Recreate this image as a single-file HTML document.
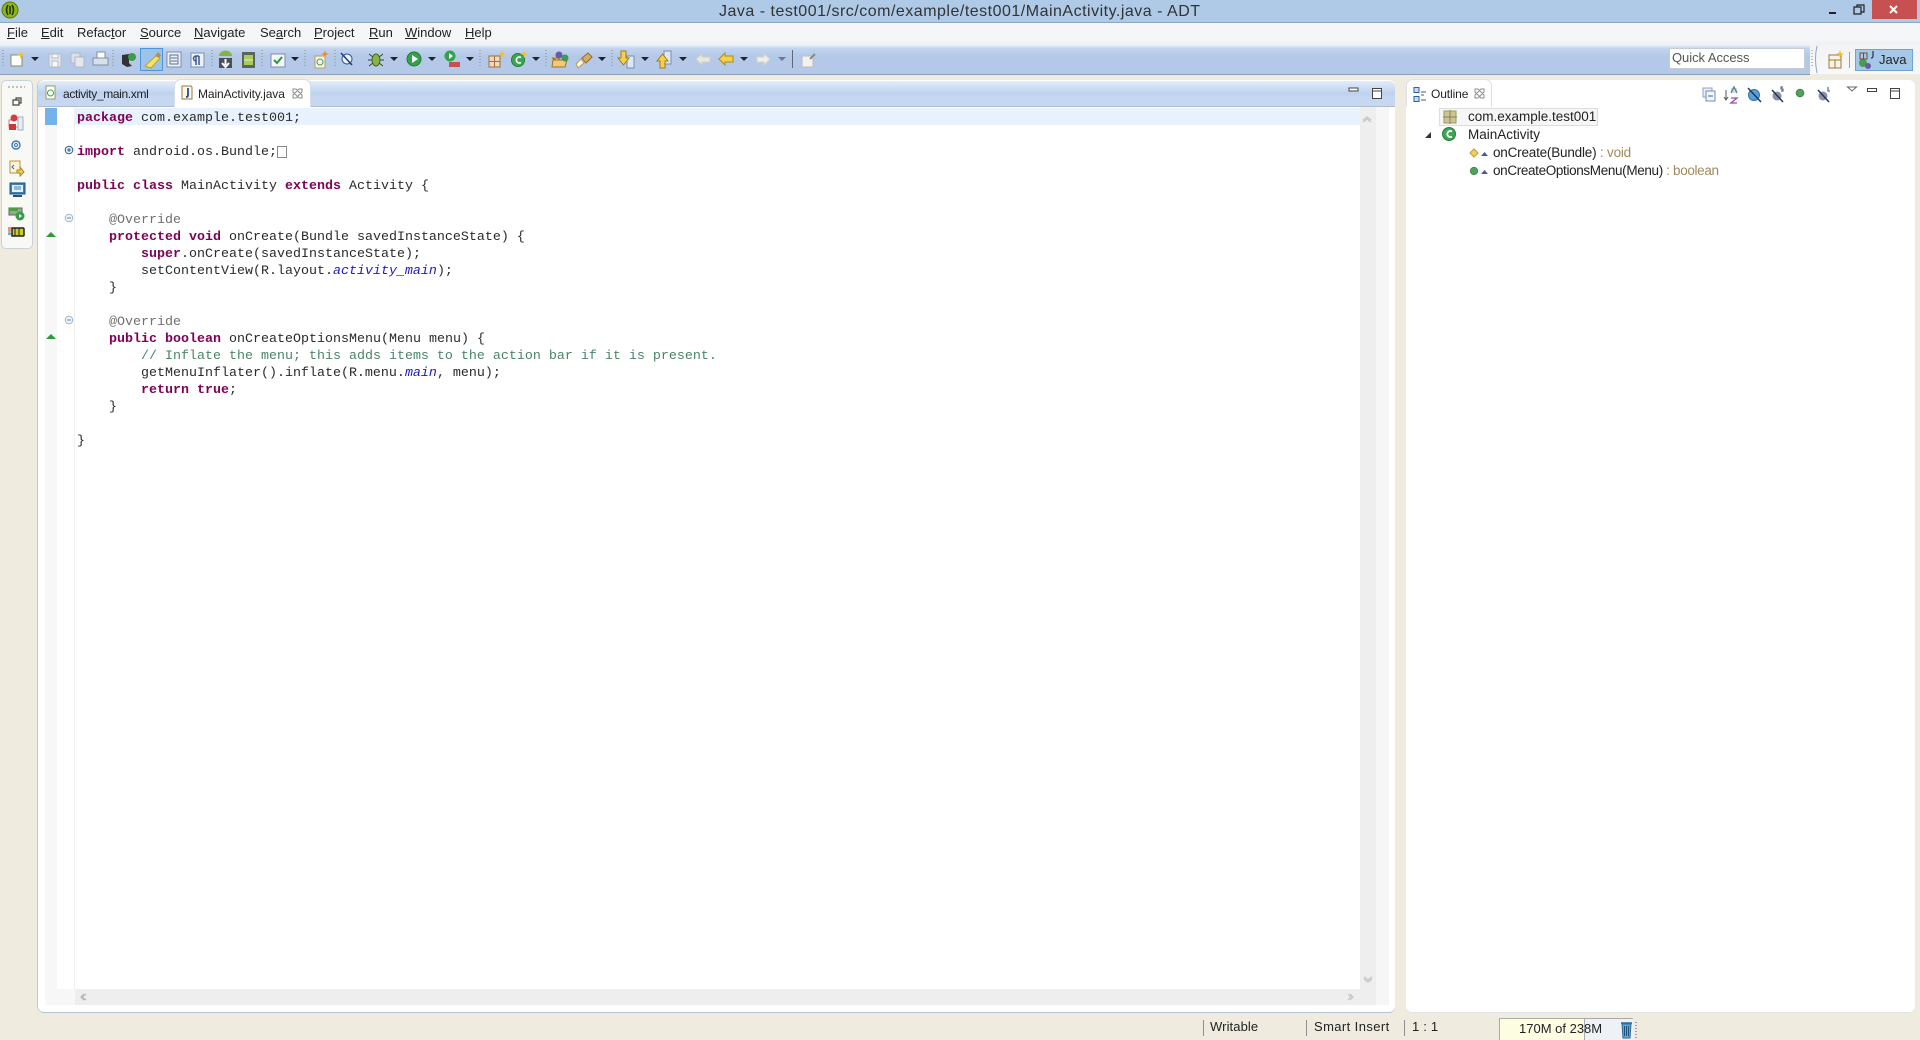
<!DOCTYPE html>
<html><head><meta charset="utf-8"><title>Java - ADT</title>
<style>
html,body{margin:0;padding:0;width:1920px;height:1040px;overflow:hidden;background:#efebdf}
body{position:relative;font-family:"Liberation Sans",sans-serif;font-size:13px;color:#222}
div{position:absolute}
.t{position:absolute;line-height:18px;height:18px;white-space:nowrap}
pre{position:absolute;margin:0;left:77px;top:110px;font:13.33px/17px "Liberation Mono",monospace;color:#2a2a2a}
b{color:#7f0055}i{color:#1a1ac0}.a{color:#707070}.c{color:#4a8468}
u{text-decoration:underline}
svg{position:absolute;left:0;top:0}
.r{color:#a08a5a}
</style></head><body>
<div style="left:0;top:0;width:1920px;height:22px;background:#aecae7"></div>
<div style="left:0;top:22px;width:1920px;height:1px;background:#8fa6c0"></div>
<div style="left:0;top:23px;width:1920px;height:18px;background:#f5f6f7"></div>
<div style="left:0;top:41px;width:1810px;height:33px;background:linear-gradient(#f3f4f6 0,#eef1f5 12%,#c3d5ef 22%,#b4c9e8 45%,#b4c9e8 100%)"></div>
<div style="left:1810px;top:41px;width:110px;height:33px;background:linear-gradient(#f1f2f4,#f7f8f9)"></div>
<div style="left:0;top:74px;width:1810px;height:1px;background:#8c9db5"></div>

<div class="t" style="left:719px;top:3px;font-size:16px;letter-spacing:.5px;color:#333">Java - test001/src/com/example/test001/MainActivity.java - ADT</div>
<div style="left:1872px;top:0;width:45px;height:19px;background:#c75050"></div>

<div class="t" style="left:7px;top:24px"><u>F</u>ile</div>
<div class="t" style="left:41px;top:24px"><u>E</u>dit</div>
<div class="t" style="left:77px;top:24px">Refac<u>t</u>or</div>
<div class="t" style="left:140px;top:24px"><u>S</u>ource</div>
<div class="t" style="left:194px;top:24px"><u>N</u>avigate</div>
<div class="t" style="left:260px;top:24px">Se<u>a</u>rch</div>
<div class="t" style="left:314px;top:24px"><u>P</u>roject</div>
<div class="t" style="left:369px;top:24px"><u>R</u>un</div>
<div class="t" style="left:405px;top:24px"><u>W</u>indow</div>
<div class="t" style="left:465px;top:24px"><u>H</u>elp</div>

<div style="left:140px;top:48px;width:21px;height:21px;background:#9cc4ea;border:1px solid #4f94d8"></div>
<div style="left:1669px;top:48px;width:134px;height:19px;background:#fff;border:1px solid #c6ccd4"></div>
<div class="t" style="left:1672px;top:49px;color:#555;letter-spacing:-.05px">Quick Access</div>
<div style="left:1855px;top:49px;width:56px;height:20px;background:#a5c8e8;border:1px solid #6fa3d4"></div>
<div class="t" style="left:1879px;top:51px">Java</div>

<!-- left trim -->
<div style="left:1px;top:80px;width:30px;height:167px;background:#f8f8f5;border:1px solid #c8d2dc;border-radius:5px"></div>

<!-- editor panel -->
<div style="left:38px;top:80px;width:1357px;height:932px;background:#fff;border-radius:6px;box-shadow:-1px 0 0 #b8ccdc,0 1px 0 #b0c4d4"></div>
<div style="left:38px;top:81px;width:1357px;height:25px;border-radius:6px 6px 0 0;background:linear-gradient(#e2ecfa 0,#cfdff5 25%,#bdd2ef 50%,#c6d7f1 65%,#c6d7f1 100%)"></div>
<div style="left:38px;top:106px;width:1357px;height:1px;background:#b0bcc8"></div>
<div style="left:175px;top:80px;width:135px;height:27px;background:#fff;border-radius:6px 6px 0 0;box-shadow:0 0 0 1px #d5dde8"></div>
<div style="left:170px;top:107px;width:145px;height:2px;background:#fff"></div>
<div class="t" style="left:63px;top:85px;font-size:12px;letter-spacing:-.35px">activity_main.xml</div>
<div class="t" style="left:198px;top:85px;font-size:12px;letter-spacing:-.1px">MainActivity.java</div>

<div style="left:45px;top:107px;width:12px;height:882px;background:#f7f7f7"></div>
<div style="left:45px;top:989px;width:30px;height:16px;background:#f7f7f7"></div>
<div style="left:75px;top:989px;width:1285px;height:16px;background:#eeeeee"></div>
<div style="left:74px;top:107px;width:1px;height:882px;background:#efefef"></div>
<div style="left:1360px;top:107px;width:16px;height:898px;background:#eeeeee"></div>
<div style="left:1376px;top:107px;width:13px;height:898px;background:#f6f6f6"></div>
<div style="left:75px;top:108px;width:1285px;height:17px;background:#e8f2fe"></div>
<div style="left:45px;top:108px;width:12px;height:17px;background:#4a9be8;opacity:.75"></div>

<pre><b>package</b> com.example.test001;

<b>import</b> android.os.Bundle;

<b>public</b> <b>class</b> MainActivity <b>extends</b> Activity {

    <span class="a">@Override</span>
    <b>protected</b> <b>void</b> onCreate(Bundle savedInstanceState) {
        <b>super</b>.onCreate(savedInstanceState);
        setContentView(R.layout.<i>activity_main</i>);
    }

    <span class="a">@Override</span>
    <b>public</b> <b>boolean</b> onCreateOptionsMenu(Menu menu) {
        <span class="c">// Inflate the menu; this adds items to the action bar if it is present.</span>
        getMenuInflater().inflate(R.menu.<i>main</i>, menu);
        <b>return</b> <b>true</b>;
    }

}</pre>
<div style="left:277px;top:146px;width:8px;height:10px;border:1px solid #888"></div>

<!-- outline panel -->
<div style="left:1406px;top:80px;width:509px;height:932px;background:#fff;border-radius:6px;box-shadow:0 1px 0 #e0e4e8"></div>
<div style="left:1407px;top:80px;width:84px;height:27px;background:#fff;border-radius:6px 6px 0 0;box-shadow:0 0 0 1px #dde2e8"></div>
<div style="left:1406px;top:107px;width:100px;height:3px;background:#fff"></div>
<div class="t" style="left:1431px;top:85px;font-size:12px;letter-spacing:-.1px">Outline</div>
<div style="left:1439px;top:108px;width:157px;height:16px;background:#f6f6f6;border:1px solid #ddd"></div>
<div class="t" style="left:1468px;top:108px;font-size:13.5px">com.example.test001</div>
<div class="t" style="left:1468px;top:126px;font-size:13.5px">MainActivity</div>
<div class="t" style="left:1493px;top:144px;font-size:13.5px;letter-spacing:-.2px">onCreate(Bundle) <span class="r">: void</span></div>
<div class="t" style="left:1493px;top:162px;font-size:13.5px;letter-spacing:-.35px">onCreateOptionsMenu(Menu) <span class="r">: boolean</span></div>

<!-- status -->
<div style="left:1203px;top:1020px;width:1px;height:16px;background:#8f8f8f"></div>
<div style="left:1306px;top:1020px;width:1px;height:16px;background:#8f8f8f"></div>
<div style="left:1404px;top:1020px;width:1px;height:16px;background:#8f8f8f"></div>
<div class="t" style="left:1210px;top:1018px;letter-spacing:.1px">Writable</div>
<div class="t" style="left:1314px;top:1018px;letter-spacing:.4px">Smart Insert</div>
<div class="t" style="left:1412px;top:1018px;letter-spacing:.2px">1 : 1</div>
<div style="left:1499px;top:1018px;width:134px;height:22px;background:#eef1f6"></div>
<div style="left:1499px;top:1018px;width:85px;height:22px;background:#fdfde2"></div>
<div style="left:1499px;top:1018px;width:1px;height:22px;background:#aaa"></div>
<div style="left:1499px;top:1018px;width:134px;height:1px;background:#aaa"></div>
<div style="left:1584px;top:1018px;width:1px;height:22px;background:#aaa"></div>
<div class="t" style="left:1519px;top:1020px">170M of 238M</div>

<svg width="1920" height="1040" viewBox="0 0 1920 1040" fill="none">
<!-- app icon -->
<circle cx="10" cy="10" r="8" fill="#8db514" stroke="#5d7a10"/>
<path d="M8 5q-3 5 0 10M12 5q3 5 0 10M10 6v8" stroke="#223300" stroke-width="1.6"/>
<!-- window buttons -->
<path d="M1829 13h7" stroke="#222" stroke-width="2"/>
<path d="M1854 7h7v7h-7zM1857 7v-2h7v7h-3" stroke="#222" stroke-width="1.2"/>
<path d="M1890 6l7 7M1897 6l-7 7" stroke="#fff" stroke-width="2"/>

<!-- toolbar separators -->
<g stroke="#8c8a70" stroke-dasharray="1 2">
<path d="M3 50v18M113 50v18M212 50v18M262 50v18M305 50v18M335 50v18M480 50v18M546 50v18M612 50v18M1812 50v18"/>
</g>
<path d="M792.500 50v18" stroke="#667"/>
<!-- dropdown arrows -->
<g fill="#222"><path d="M31 57h8l-4 4zM291 57h8l-4 4zM390 57h8l-4 4zM428 57h8l-4 4zM466 57h8l-4 4zM532 57h8l-4 4zM598 57h8l-4 4zM641 57h8l-4 4zM679 57h8l-4 4zM740 57h8l-4 4z"/></g>
<path d="M778 57h8l-4 4z" fill="#6c7a8c"/>
<!-- new -->
<path d="M11 55h11v11h-11z" fill="#fff" stroke="#8a8f60"/><path d="M21 51l1 3 3 1-3 1-1 3-1-3-3-1 3-1z" fill="#f3c316"/>
<!-- save, save all, print -->
<path d="M49 54h12v13h-12z" fill="#e4e8ee" stroke="#b5bcc6"/><path d="M52 54h6v4h-6zM52 61h6v6h-6z" fill="#f6f7f8" stroke="#b5bcc6"/>
<path d="M71 53h9v10h-9z" fill="#dbe0e8" stroke="#b0b8c4"/><path d="M75 57h9v10h-9z" fill="#e4e8ee" stroke="#b0b8c4"/>
<path d="M97 52h8v6h-8z" fill="#fff" stroke="#7f8fa5"/><path d="M93 58h15v7h-15z" fill="#d8e0ea" stroke="#7f8fa5"/>
<!-- open type -->
<path d="M122 55l7-1v9l3 3-5 1-5-3z" fill="#333"/><circle cx="132" cy="57" r="4" fill="#3d9a4f"/>
<!-- highlight -->
<path d="M145 66l12-11 3 3-9 10z" fill="#f5e46a" stroke="#c2a52a"/><path d="M155 56l3-4 3 3-2 3z" fill="#b09060"/>
<!-- list, pilcrow -->
<path d="M167 52h14v15h-14z" fill="#eef2f8" stroke="#7c8ea8"/><path d="M170 55h8v9h-8zM171 58h6M171 61h6" stroke="#5b6f90"/>
<path d="M191 53h13v14h-13z" fill="#eef2f8" stroke="#7c8ea8"/><path d="M199 56v9M196 56v9M199 56h-3a2.500 2.500 0 0 0 0 5" stroke="#365a8a" stroke-width="1.5"/>
<!-- android download -->
<path d="M219 56a6 5 0 0 1 13 0z" fill="#86b53c"/><path d="M219 58h13v10h-13z" fill="#4a5058"/><path d="M225.500 59v6M222 63l3.500 4 3.500-4" stroke="#fff" stroke-width="2"/>
<!-- android avd -->
<path d="M242 52h13v16h-13z" fill="#5b6460"/><path d="M244 55h9v10h-9z" fill="#a7cc58"/><path d="M244 60h9" stroke="#e8f0d8"/>
<!-- check -->
<path d="M271 54h14v13h-14z" fill="#f4f6f8" stroke="#7c8ea8"/><path d="M274 60l3 3 5-6" stroke="#2b9a3f" stroke-width="2"/>
<!-- android new -->
<path d="M315 56h10v12h-10z" fill="#f6f4e8" stroke="#c09a55"/><circle cx="320" cy="62" r="3" stroke="#3aa35c"/><path d="M325 50l1 3 3 1-3 1-1 3-1-3-3-1 3-1z" fill="#ee8a30"/>
<!-- mark -->
<ellipse cx="347" cy="59" rx="5" ry="5" fill="#eef2f8" stroke="#34569a"/><path d="M341 53l11 12" stroke="#1f3a80" stroke-width="1.500"/>
<!-- debug -->
<ellipse cx="376" cy="60" rx="4" ry="6" fill="#8ab44a" stroke="#3f6a20"/><path d="M369 54l4 3M383 54l-4 3M368 60h4M384 60h-4M369 66l4-3M383 66l-4-3" stroke="#3a4a2a"/>
<!-- run -->
<circle cx="414" cy="59" r="7" fill="#34a24a" stroke="#247a36"/><path d="M412 55l6 4-6 4z" fill="#fff"/>
<circle cx="450" cy="56" r="5.500" fill="#34a24a"/><path d="M449 53l4 3-4 3z" fill="#fff"/><path d="M449 62h11v5h-11z" fill="#c85050"/>
<!-- grid -->
<path d="M489 56h11v11h-11zM494.500 56v11M489 61.500h11" stroke="#a86a40" fill="#eadcb8"/><path d="M502 50l1 3 3 1-3 1-1 3-1-3-3-1 3-1z" fill="#f3c316"/>
<!-- new class -->
<circle cx="518" cy="60" r="6.500" fill="#3da553" stroke="#2a7a3c"/><path d="M521 57.500a3 3 0 1 0 0 5" stroke="#fff" stroke-width="1.6"/><path d="M524 50l1 3 3 1-3 1-1 3-1-3-3-1 3-1z" fill="#f3c316"/>
<!-- folder -->
<path d="M552 58h6l2 2h-3l-1 0zM553 60h14l-2 7h-13z" fill="#f3c878" stroke="#a0752a"/><circle cx="559" cy="55" r="3.500" fill="#6a58a8"/><circle cx="565" cy="58" r="3.500" fill="#3e9a50"/>
<!-- flashlight -->
<path d="M578 68l-2-4 5-5 3 4z" fill="#fdf6dc" stroke="#c09a55"/><path d="M582 58l6-5 4 4-6 6z" fill="#d8ac5c" stroke="#8a6a30"/>
<!-- annotation down -->
<path d="M627 56h7v12h-7z" fill="#dde6f4" stroke="#7c8ea8"/><path d="M621 51h5v7h3l-5.500 7-5.500-7h3z" fill="#f6d04c" stroke="#a07a20"/>
<path d="M664 51h7v13h-7z" fill="#dde6f4" stroke="#7c8ea8"/><path d="M660 68h5v-7h3l-5.500-7-5.500 7h3z" fill="#f6d04c" stroke="#a07a20"/>
<!-- nav -->
<path d="M696 59l6-5v3h8v5h-8v3z" fill="#e8e8e0" stroke="#cfcfc4"/>
<path d="M719 59l6-6v3h8v6h-8v3z" fill="#f6d04c" stroke="#b08a20"/>
<path d="M770 59l-6-5v3h-7v5h7v3z" fill="#eeeeea" stroke="#d4d4cc"/>
<path d="M802 56h11v11h-11z" fill="#f2f2ee" stroke="#b8bcc0"/><path d="M810 59l5-5" stroke="#8a8a8a" stroke-width="2"/>
<!-- perspective -->
<path d="M1817 46q-3 12 0 27" stroke="#8ba4c4"/>
<path d="M1829 55h12v13h-12zM1829 60h12M1835 60v8" stroke="#9a7a40" fill="#f8f4e4"/><path d="M1840 50l1 3 3 1-3 1-1 3-1-3-3-1 3-1z" fill="#f3c316"/>
<path d="M1849.500 52v16" stroke="#9aa4b0"/>
<circle cx="1863" cy="63" r="4" fill="#4a9a50"/><circle cx="1868" cy="66" r="3" fill="#6a58a8"/><path d="M1860 53h7v6h-7zM1863.500 53v6" stroke="#7a4a2a"/><path d="M1873 51v5q0 2-2 2" stroke="#2a3a60" stroke-width="1.300"/>

<!-- trim dots -->
<path d="M8 87h17" stroke="#888" stroke-dasharray="2 2"/>
<path d="M13 100h6v5h-6zM16 100v-2h5v5h-2" stroke="#444" stroke-width="1.200"/>
<path d="M9 120h10v7h-10z" fill="#fff" stroke="#c87a7a"/><circle cx="14" cy="118" r="3.500" fill="#d04040"/><path d="M9 124h7v6h-7z" fill="#c83838"/><path d="M18 117h5v13h-5z" fill="#e6ecf2" stroke="#9fb0c0"/>
<circle cx="16" cy="145" r="4" stroke="#3a78b0" stroke-width="1.400"/><circle cx="16" cy="145" r="1.500" stroke="#3a78b0"/>
<path d="M10 161h10v12h-10z" fill="#fbf3d8" stroke="#b8953f"/><path d="M17 170h3v-3l4 5-4 4v-3h-3z" fill="#f0cc50" stroke="#a8842a"/><path d="M14 165l-2 2 2 2" stroke="#3a6ab0"/>
<path d="M10 183h15v11h-15z" fill="#3f7fb5" stroke="#25507a"/><path d="M12 185h11v7h-11z" fill="#e6f0fa"/><path d="M14 187h7M14 189h7" stroke="#3f7fb5"/><path d="M13 196h9" stroke="#25507a" stroke-width="2"/>
<path d="M9 208h13v7h-13z" fill="#9aa59a" stroke="#5a6a5a"/><path d="M9 208h9v3h-9z" fill="#4aa03a"/><circle cx="20" cy="216" r="4.500" fill="#3a9a4a"/><path d="M19 214l3 2-3 2z" fill="#fff"/>
<path d="M12 228h11a1 1 0 0 1 1 1v6a1 1 0 0 1-1 1h-11z" fill="#c8d020" stroke="#222" stroke-width="1.500"/><path d="M8 228h4M8 230h4" stroke="#d03030"/><path d="M8 232h4" stroke="#30a030"/><path d="M8 234h4" stroke="#3030d0"/><path d="M15 228v8M19 228v8" stroke="#222"/>

<!-- tab icons -->
<path d="M46 86h9v13h-9z" fill="#fff" stroke="#9a9a60"/><circle cx="50.500" cy="93" r="3" stroke="#3aa35c"/>
<path d="M182 86h9l1 1v12h-10z" fill="#fdf8e8" stroke="#9a7a40"/><path d="M188 88v7q0 2-2 2" stroke="#1e4f96" stroke-width="1.800"/>
<path d="M293 89l3 0 6 6 0 3-3 0-6-6zM302 89l0 3-6 6-3 0 0-3 6-6z" stroke="#8a9088" fill="#fff"/>
<!-- editor view controls -->
<path d="M1349 88h9v3h-9z" fill="#fff" stroke="#444"/>
<path d="M1372.500 88.500h9v10h-9zM1372.500 91h9" stroke="#444" fill="#fff"/>
<!-- gutter -->
<circle cx="69" cy="150" r="3.800" fill="#e6eff8" stroke="#2f5f8f"/><path d="M67 150h4M69 148v4" stroke="#2f5f8f"/>
<circle cx="69" cy="218" r="3.800" fill="#eef3f8" stroke="#9fb4c8"/><path d="M67 218h4" stroke="#6f8aa5"/>
<circle cx="69" cy="320" r="3.800" fill="#eef3f8" stroke="#9fb4c8"/><path d="M67 320h4" stroke="#6f8aa5"/>
<path d="M46 237l5-5 5 5z" fill="#2e9a38"/><path d="M46 339l5-5 5 5z" fill="#2e9a38"/>
<!-- scroll arrows -->
<path d="M1363 120l4-3 4 3M1363 122l4-3 4 3" stroke="#c4c4c4" stroke-width="1.200"/>
<path d="M1364 977l4 3 4-3M1364 979l4 3 4-3" stroke="#c4c4c4" stroke-width="1.200"/>
<path d="M1348 994l3 3-3 3M1350 994l3 3-3 3" stroke="#c4c4c4" stroke-width="1.200"/>
<path d="M86 994l-4 3 4 3M84 994l-3 3 3 3" stroke="#b8b8b8" stroke-width="1.400"/>
<!-- outline tab icon, close -->
<path d="M1414 87.500h5v5h-5zM1414 96.500h5v5h-5z" stroke="#2f5f9f" fill="#c4dcf4"/><path d="M1421 92h5M1421 95h3M1421 100h5" stroke="#2f5f9f"/>
<path d="M1475 89l3 0 6 6 0 3-3 0-6-6zM1484 89l0 3-6 6-3 0 0-3 6-6z" stroke="#8a9088" fill="#fff"/>
<!-- outline toolbar -->
<path d="M1703 88h9v9h-9z" stroke="#8fa3bc" fill="#e6eef8"/><path d="M1706 91h9v10h-9z" stroke="#6f8fb5" fill="#f2f6fb"/><path d="M1708 96h5" stroke="#3f5f8f"/>
<path d="M1726 90v10M1724 97l2 3 2-3" stroke="#555"/><path d="M1731 88h6v5h-6z" fill="#a058b0" opacity=".25"/><path d="M1731 98h6l-6 5h6" stroke="#9a4aa8" stroke-width="1.300"/><path d="M1731 93l3-6 3 6" stroke="#3d8a8a" stroke-width="1.300"/>
<circle cx="1754" cy="95" r="5.500" fill="#5aa0d8" stroke="#2f6fa8"/><path d="M1748 88l13 14" stroke="#24345f" stroke-width="1.500"/>
<circle cx="1777" cy="96" r="4.500" fill="#8a92a0"/><path d="M1772 90l11 12" stroke="#24345f" stroke-width="1.500"/><path d="M1783 87h-2v2h2v2h-2" stroke="#3a4a7a"/>
<circle cx="1800" cy="93" r="3.800" fill="#4fa35c" stroke="#3a8a48"/>
<circle cx="1823" cy="96" r="4.500" fill="#8a92a0"/><path d="M1818 90l11 12" stroke="#24345f" stroke-width="1.500"/><path d="M1828 87v4h2" stroke="#3a4a7a"/>
<path d="M1847.500 87h9l-4.500 4z" stroke="#666" fill="#fff"/>
<path d="M1867.500 88.500h9v3h-9z" fill="#fff" stroke="#444"/>
<path d="M1890.500 88.500h9v10h-9zM1890.500 91h9" stroke="#444" fill="#fff"/>
<!-- outline tree -->
<path d="M1444 111h12v12h-12z" fill="#cdc48f" stroke="#a09a6a"/><path d="M1450 110v14M1443 117h14" stroke="#8a8358"/>
<path d="M1431 132v6h-6z" fill="#333"/>
<circle cx="1449" cy="134" r="6.500" fill="#3da553" stroke="#2a7a3c"/><path d="M1452 131.500a3 3 0 1 0 0 5" stroke="#fff" stroke-width="1.800"/>
<path d="M1474 149l4 4-4 4-4-4z" fill="#f3cf60" stroke="#c09a30"/>
<path d="M1481 156l3.500-4 3.500 4z" fill="#4a5a96"/>
<circle cx="1474" cy="171" r="3.600" fill="#4fa35c" stroke="#3a8a48"/>
<path d="M1481 174l3.500-4 3.500 4z" fill="#4a5a96"/>
<!-- trash -->
<path d="M1622 1024h9l-1 14h-7z" fill="#5fa8d8" stroke="#2f6a9a"/><path d="M1621 1023h11" stroke="#2f6a9a" stroke-width="1.500"/><path d="M1624.500 1026v10M1626.500 1026v10M1628.500 1026v10" stroke="#1f5078"/>
<path d="M1636 1022v16" stroke="#888" stroke-dasharray="1 2" stroke-width="1.500"/>
</svg>
</body></html>
